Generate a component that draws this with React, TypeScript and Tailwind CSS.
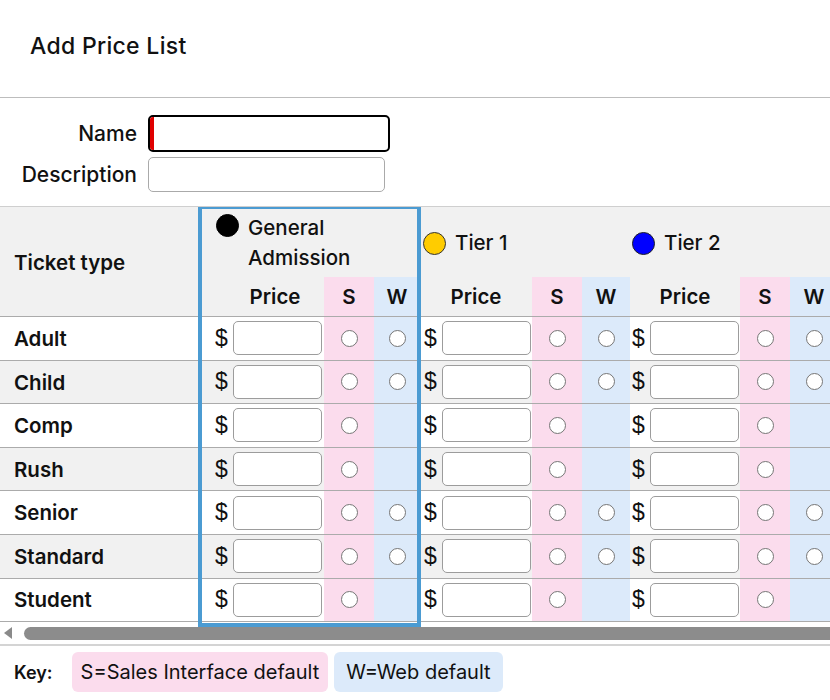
import React from "react";

type Group = {
  name: React.ReactNode;
  dot: string;
  widths: [number, number, number];
  pricePad: string;
  priceHead: string;
  top: string;
};

// columnas por grupo: precio, S, W
const groups: Group[] = [
  {
    name: (
      <>
        General
        <br />
        Admission
      </>
    ),
    dot: "bg-black border-black",
    widths: [124, 50, 46],
    pricePad: "pl-[15px]",
    priceHead: "pl-[26px]",
    top: "items-start pt-[6px] pl-[16px]",
  },
  {
    name: "Tier 1",
    dot: "bg-[#ffcc00] border-[#333]",
    widths: [112, 50, 48],
    pricePad: "pl-[4px]",
    priceHead: "",
    top: "items-center pt-[2px] pl-[3px]",
  },
  {
    name: "Tier 2",
    dot: "bg-[#0000ff] border-[#222]",
    widths: [110, 50, 48],
    pricePad: "pl-[2px]",
    priceHead: "",
    top: "items-center pt-[2px] pl-[2px]",
  },
];

const rows: { label: string; web: boolean }[] = [
  { label: "Adult", web: true },
  { label: "Child", web: true },
  { label: "Comp", web: false },
  { label: "Rush", web: false },
  { label: "Senior", web: true },
  { label: "Standard", web: true },
  { label: "Student", web: false },
];

function Radio() {
  return <span className="block w-[17px] h-[17px] rounded-full border border-[#767676] bg-white" />;
}

export default function App() {
  return (
    <div className="w-[830px] h-[700px] overflow-hidden bg-white text-[#111] font-['Inter','Noto_Sans',sans-serif]">
      {/* Titulo */}
      <div className="h-[98px] border-b border-[#bdbdbd] pl-[30px] pt-[31px]">
        <h1 className="text-[23px] font-medium leading-[30px] tracking-[0.3px]">Add Price List</h1>
      </div>

      {/* Formulario */}
      <div className="grid grid-cols-[137px_auto] gap-x-[11px] gap-y-[5px] pt-[17px] pb-[14px] items-center">
        <label className="text-right text-[21px] font-medium">Name</label>
        <div className="relative w-[242px] h-[37px] rounded-[5px] border-2 border-black bg-white overflow-hidden">
          <span className="absolute left-0 top-0 bottom-0 w-[4px] bg-[#e00000]" />
        </div>
        <label className="text-right text-[21px] font-medium">Description</label>
        <div className="w-[237px] h-[35px] rounded-[5px] border border-[#aaa] bg-white" />
      </div>

      {/* Tabla */}
      <div className="relative border-t border-[#cfcfcf] overflow-hidden">
        <div className="w-[838px]">
          {/* cabecera */}
          <div className="flex h-[110px] bg-[#f1f1f1] border-b border-[#ababab]">
            <div className="w-[200px] shrink-0 flex items-center pl-[14px] pt-[3px] text-[20.5px] font-semibold">Ticket type</div>
            {groups.map((g, gi) => (
              <div key={gi} className="flex flex-col shrink-0" style={{ width: g.widths[0] + g.widths[1] + g.widths[2] }}>
                <div className={`h-[70px] flex gap-[9px] ${g.top}`}>
                  <span className={`w-[23px] h-[23px] rounded-full border shrink-0 ${g.dot} ${gi === 0 ? "mt-[1px]" : ""}`} />
                  <span className="text-[20.5px] font-medium leading-[30px]">{g.name}</span>
                </div>
                <div className="flex h-[39px] pt-[2px] text-[20.5px] font-semibold">
                  <div className={`flex items-center justify-center ${g.priceHead}`} style={{ width: g.widths[0] }}>
                    Price
                  </div>
                  <div className="flex items-center justify-center bg-[#fbdced] -mt-[2px] pt-[2px]" style={{ width: g.widths[1] }}>
                    S
                  </div>
                  <div className="flex items-center justify-center bg-[#dceafa] -mt-[2px] pt-[2px]" style={{ width: g.widths[2] }}>
                    W
                  </div>
                </div>
              </div>
            ))}
          </div>

          {/* filas */}
          {rows.map((r, ri) => {
            const bg = ri % 2 === 0 ? "bg-white" : "bg-[#f1f1f1]";
            return (
              <div key={r.label} className="flex h-[43.6px] border-b border-[#ababab]">
                <div className={`w-[200px] shrink-0 flex items-center pl-[14px] pt-[2px] text-[20.5px] font-semibold ${bg}`}>
                  {r.label}
                </div>
                {groups.map((g, gi) => (
                  <React.Fragment key={gi}>
                    <div className={`flex items-center shrink-0 ${g.pricePad} ${bg}`} style={{ width: g.widths[0] }}>
                      <span className="text-[23px] font-['Liberation_Sans',sans-serif] leading-none w-[12px]">$</span>
                      <span className="ml-[6px] w-[89px] h-[34px] rounded-[5px] border border-[#9c9c9c] bg-white" />
                    </div>
                    <div className="flex items-center justify-center shrink-0 bg-[#fbdced]" style={{ width: g.widths[1] }}>
                      <Radio />
                    </div>
                    <div className="flex items-center justify-center shrink-0 bg-[#dceafa]" style={{ width: g.widths[2] }}>
                      {r.web && <Radio />}
                    </div>
                  </React.Fragment>
                ))}
              </div>
            );
          })}
        </div>

        {/* scrollbar */}
        <div className="flex items-center h-[24px] border-b-2 border-[#d4d4d4]">
          <svg width="24" height="14" viewBox="0 0 24 14" className="shrink-0">
            <path d="M12 1 L4 7 L12 13 Z" fill="#8a8a8a" />
          </svg>
          <div className="flex-1 h-[13px] rounded-l-full bg-[#8c8c8c]" />
        </div>

        {/* recuadro de la columna seleccionada */}
        <div className="absolute left-[198px] top-[-2px] w-[223px] h-[422px] border-4 border-[#4b9bd2] pointer-events-none" />
      </div>

      {/* Leyenda */}
      <div className="flex items-center gap-[6px] pt-[6px] pl-[14px]">
        <span className="text-[18px] font-semibold mr-[13px]">Key:</span>
        <span className="h-[40px] px-[9px] flex items-center rounded-[6px] bg-[#fbdced] text-[20px] font-normal">
          S=Sales Interface default
        </span>
        <span className="h-[40px] px-[12px] flex items-center rounded-[6px] bg-[#dceafa] text-[20px] font-normal">
          W=Web default
        </span>
      </div>
    </div>
  );
}
